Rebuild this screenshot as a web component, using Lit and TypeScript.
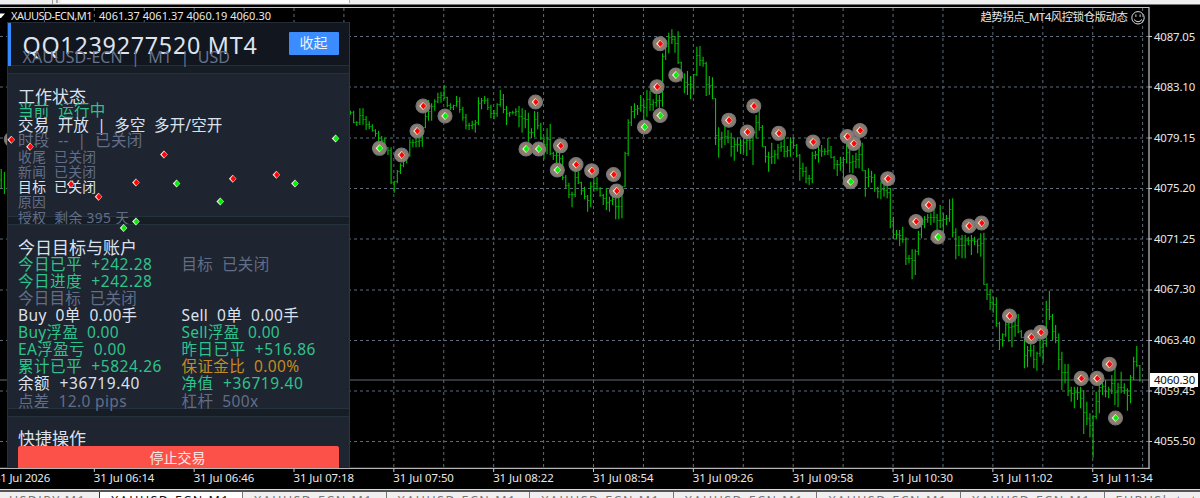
import { LitElement, html, svg, css } from "lit";
import { customElement, property } from "lit/decorators.js";

const STEP = 3.12;
const ORIGIN = 394.2;
const GRID_Y = [36.5, 87, 138, 188.5, 239, 290, 340.5, 391, 441.5];
const PRICES = ["4087.05", "4083.10", "4079.15", "4075.20", "4071.25", "4067.30", "4063.40", "4059.45", "4055.50"];
const TIMES = ["31 Jul 2026", "31 Jul 06:14", "31 Jul 06:46", "31 Jul 07:18", "31 Jul 07:50", "31 Jul 08:22", "31 Jul 08:54", "31 Jul 09:26", "31 Jul 09:58", "31 Jul 10:30", "31 Jul 11:02", "31 Jul 11:34"];

// Each series: first bar index, vertical base, then "high-low" pairs in thirds of a pixel.
const SERIES: [number, number, string][] = [
  [-14, 60, "152-164 152-190 184-198 145-195 145-194 168-210 184-208 193-215 208-230 212-245 228-255 233-265 262-285 262-372 362-398 330-370 310-342 295-322 280-310 238-290 238-262 230-262 225-262 198-260 160-205 120-182 130-182 118-152 98-130 95-128 75-118 110-142 130-150 134-150 108-140 112-158 140-182 162-208 188-210 182-208 180-218 112-195 114-148 108-132 114-150 134-175 150-178 130-170 90-140"],
  [35, 80, "42-100 78-135 95-110 92-103 85-108 78-142 85-158 90-145 98-185 145-175 93-172 95-148 128-180 170-238 145-222 132-225 215-240 180-250 205-250 225-300 285-325 308-355 335-382 270-352 275-312 305-345 320-358 345-395 305-382 295-335 292-332 322-350 342-375 325-390 350-395 335-375 345-418 348-418 320-415 215-320 118-228"],
  [76, 0, "318-378 310-355 315-345 285-335 300-375 270-350 272-332 298-332 275-320 285-345 160-320 120-180 98-160 88-132 108-158 94-192 185-245 220-280 213-285 228-298 222-282 140-228 138-198 170-200 185-288 228-285 232-298 295-435 382-473 395-445 375-435 390-430 398-470 415-482 412-455 418-462 400-458 395-468 400-450 385-495 345-415 320-392 375-440 438-488 455-515 428-492 450-492 432-478 425-455 410-472 438-472 412-470"],
  [128, 100, "112-145 132-172 162-242 188-230 200-250 225-255 155-250 152-178 122-188 135-170 145-165 114-165 138-175 168-208 180-228 170-212 170-255 125-190 130-218 165-220 158-205 108-205 128-212 210-290 205-262 212-248 222-275 260-295 245-298 250-290 255-295 265-385 350-418 390-418 390-438 380-428 412-495 465-490 448-538 448-525 392-465 365-415 348-385 342-368 340-375 315-368 342-392 315-385 340-405 345-375 298-365 295-412 385-478 408-468"],
  [182, 190, "135-205 135-205 140-165 135-195 140-165 148-190 130-200 128-285 280-330 298-360 320-368 322-410 395-480 430-470 370-440 375-455 375-472 385-440 372-430 420-445 440-535 468-532 460-500 465-535 485-542 440-500 450-518 332-470 302-390 372-450 405-460 430-540 485-600 522-580 522-618 590-635 590-655 590-630 590-655 600-732 635-705 670-742 675-803 605-688 575-670 568-615 570-622 590-625 555-612 520-645 578-652 545-610 580-612 595-662 555-640 500-570 468-530 525-575"],
];

interface Bar { x: number; high: number; low: number }

const BARS: Bar[] = SERIES.flatMap(([first, base, data]) =>
  data.split(" ").map((pair, n) => {
    const [h, l] = pair.split("-").map(Number);
    return { x: ORIGIN + (first + n) * STEP, high: base + h / 3, low: base + l / 3 };
  })
);

const stems = (): string =>
  "M1.2 169V188M4.4 172V194" + BARS.map((b) => `M${b.x.toFixed(2)} ${b.high.toFixed(1)}V${b.low.toFixed(1)}`).join("");

// Open and close notches between neighbouring bars.
const notches = (): string => {
  let d = "M0 180H2";
  BARS.forEach((b, i) => {
    const next = BARS[i + 1];
    if (next) {
      const top = Math.max(b.high, next.high);
      const bottom = Math.min(b.low, next.low);
      const y = Math.floor(top + (bottom - top) * 0.45) + 0.5;
      d += `M${b.x.toFixed(2)} ${y}h1.6M${(next.x - 1.2).toFixed(2)} ${y}h1.2`;
    }
  });
  return d;
};

type Mark = [number, number, "r" | "g"];
const SIGNALS: Mark[] = [
  [379.5, 148.3, "g"], [401.5, 155, "r"], [417, 131, "r"], [423, 106, "r"], [445, 116, "g"],
  [535.5, 102, "r"], [526, 149, "g"], [538.7, 149, "g"], [560.5, 145.8, "r"], [557.3, 170, "g"],
  [576, 164.5, "r"], [591.7, 170.7, "r"], [613.5, 174.5, "r"], [616.5, 191, "r"], [657, 86.7, "r"],
  [660, 43.7, "r"], [660.2, 115.5, "g"], [644.5, 127, "g"], [675.8, 75, "g"], [728.8, 120.2, "r"],
  [747.3, 132, "r"], [753.8, 106, "r"], [778.7, 133.3, "r"], [813, 142, "r"], [847.3, 136.5, "r"],
  [853.7, 143.5, "r"], [860, 130.5, "r"], [850.5, 181.7, "g"], [887.8, 178.7, "r"], [916, 221.5, "r"],
  [928.6, 205.1, "r"], [938, 237, "g"], [969, 226, "r"], [981.5, 223, "r"], [1009.5, 316, "r"],
  [1031.2, 337, "r"], [1040.8, 332.2, "r"], [1081.2, 378.4, "r"], [1097, 378.4, "r"], [1109.3, 364.2, "r"],
  [1115.5, 418, "g"],
];
const ON_PANEL: Mark[] = [
  [11.3, 139.8, "r"], [30, 146.8, "r"], [164, 154.6, "r"], [335.6, 138.4, "g"], [136, 182.5, "r"],
  [176.6, 183.5, "g"], [232.8, 178.8, "r"], [276.4, 174.8, "r"], [295, 183.5, "g"], [70.8, 184.2, "r"],
  [98.6, 196.8, "r"], [220.3, 201.5, "g"], [136, 221.6, "g"], [123.6, 228, "g"],
];

const diamond = ([x, y, kind]: Mark) => svg`
  <path d=${`M${x} ${y - 4}L${x + 3.7} ${y}L${x} ${y + 4}L${x - 3.9} ${y}Z`} fill="#f4ece8"></path>
  <path d=${`M${x + 0.2} ${y - 3.2}L${x + 3.3} ${y}L${x + 0.2} ${y + 3.2}L${x - 2.3} ${y}Z`} fill=${kind === "r" ? "#ff0505" : "#00f400"}></path>`;

/** A run of text whose tracking is tuned so that it spans a known width. */
@customElement("text-run")
export class TextRun extends LitElement {
  @property() text = "";
  @property({ type: Number }) span = 0;

  static styles = css`
    :host { display: block; white-space: pre; flex: none; }
    .run { display: inline-block; white-space: pre; }
  `;

  firstUpdated() {
    const el = this.renderRoot.querySelector(".run") as HTMLElement;
    const natural = el.getBoundingClientRect().width;
    if (this.span && natural) {
      el.style.letterSpacing = `${((this.span - natural) / this.text.length).toFixed(3)}px`;
    }
  }

  render() {
    return html`<span class="run">${this.text}</span>`;
  }
}

type Cell = [string, number, string];
const STATUS: [string, number, string, string][] = [
  ["当前  运行中", 87.5, "green", "big"],
  ["交易  开放  |  多空  多开/空开", 204.5, "white", "big"],
  ["时段  --  |  已关闭", 124.5, "dim", "big"],
  ["收尾  已关闭", 78.5, "dim", "small"],
  ["新闻  已关闭", 78.5, "dim", "small"],
  ["目标  已关闭", 78.5, "white", "small"],
  ["原因", 28, "dim", "small"],
  ["授权  剩余 395 天", 111.5, "dim", "small"],
];
const ACCOUNT: [Cell, Cell?][] = [
  [["今日已平  +242.28", 134.5, "green"], ["目标  已关闭", 88, "dim"]],
  [["今日进度  +242.28", 134.5, "green"]],
  [["今日目标  已关闭", 119, "dim"]],
  [["Buy  0单  0.00手", 119.5, "white"], ["Sell  0单  0.00手", 117.5, "white"]],
  [["Buy浮盈  0.00", 101, "green"], ["Sell浮盈  0.00", 98.5, "green"]],
  [["EA浮盈亏  0.00", 108, "green"], ["昨日已平  +516.86", 134.5, "green"]],
  [["累计已平  +5824.26", 144, "green"], ["保证金比  0.00%", 118, "amber"]],
  [["余额  +36719.40", 122, "white"], ["净值  +36719.40", 122, "green"]],
  [["点差  12.0 pips", 109, "dim"], ["杠杆  500x", 77, "dim"]],
];

@customElement("status-panel")
export class StatusPanel extends LitElement {
  static styles = css`
    :host {
      display: flex; flex-direction: column; box-sizing: border-box; overflow: hidden;
      width: 343px; height: 446px; background: #171d25; border-right: 1px solid #2b3642;
      border-left: 1px solid #25303c; font-family: "Noto Sans", "Noto Sans CJK SC", sans-serif;
    }
    .head { display: flex; height: 44px; flex: none; box-sizing: border-box; background: #12161f;
      border-top: 1px solid #232c37; border-bottom: 1px solid #232f3a; }
    .accent { width: 4px; height: 43px; background: #348aff; margin-left: -1px; }
    .titles { flex: 1; padding: 9px 0 0 11.5px; color: #dde4f0; }
    .name { font-size: 23.3px; line-height: 26px; height: 18.5px; }
    .pair { font-size: 16px; line-height: 12px; color: #66728b; }
    .fold { width: 50px; height: 23px; margin: 9px 10px 0 0; border-radius: 1px; background: #3a8cff;
      color: #edf4ff; font-size: 14px; line-height: 22px; text-align: center; text-indent: -1px; }
    .card { flex: none; box-sizing: border-box; background: #1e2430; margin-top: 7px; padding-left: 10px;
      border-top: 1px solid #25323e; border-bottom: 1px solid #25323e; }
    .status { height: 144px; padding-top: 14px; }
    .account { height: 185px; padding-top: 14px; }
    .actions { height: 60px; padding-top: 13px; }
    .heading { font-size: 17px; line-height: 17px; color: #dbe2ee; }
    .status .heading { height: 14.8px; }
    .account .heading { height: 16.5px; }
    .actions .heading { height: 16px; }
    .row { display: grid; grid-template-columns: 163.5px 1fr; height: 17.15px; line-height: 17.15px; font-size: 15.5px; }
    .line { height: 15.25px; line-height: 15.25px; }
    .big { font-size: 15.5px; }
    .small { font-size: 13.8px; }
    .green { color: #2fc28c; }
    .white { color: #dbe2ee; }
    .dim { color: #626e87; }
    .amber { color: #c48c20; }
    .stop { width: 321px; height: 30px; background: #fb5148; border-radius: 2px; color: #ffe9e7;
      font-size: 14px; line-height: 24px; text-align: center; box-sizing: border-box; padding-right: 2px; position: relative; }
  `;

  render() {
    return html`
      <div class="head">
        <div class="accent"></div>
        <div class="titles">
          <text-run class="name" text="QQ1239277520 MT4" span="235"></text-run>
          <text-run class="pair" text="XAUUSD-ECN  |  M1  |  USD" span="207.5"></text-run>
        </div>
        <div class="fold">收起</div>
      </div>
      <div class="card status">
        <div class="heading">工作状态</div>
        ${STATUS.map(([t, w, tone, size]) => html`<text-run class="line ${tone} ${size}" text=${t} span=${w}></text-run>`)}
      </div>
      <div class="card account">
        <div class="heading">今日目标与账户</div>
        ${ACCOUNT.map((cells) => html`<div class="row">
          ${cells.map((c) => (c ? html`<text-run class=${c[2]} text=${c[0]} span=${c[1]}></text-run>` : null))}
        </div>`)}
      </div>
      <div class="card actions">
        <div class="heading">快捷操作</div>
        <div class="stop">停止交易</div>
      </div>
    `;
  }
}

@customElement("app-root")
export class AppRoot extends LitElement {
  static styles = css`
    :host { display: flex; flex-direction: column; width: 1200px; height: 498px; overflow: hidden;
      background: #000; color: #e8e8e8; font-family: "Noto Sans", "Noto Sans CJK SC", sans-serif; font-size: 11px; }
    .toolbar { display: flex; flex: none; height: 4px; background: #efefef; border-bottom: 1px solid #777; }
    .tools { width: 52px; border-right: 1px solid #999; }
    .grip { width: 2px; height: 3px; margin-left: 3px; background: #aaa; }
    .field { width: 288px; height: 3px; margin-left: 3px; background: #fbfbfb; border-right: 1px solid #aaa; }
    .stage { display: grid; flex: none; height: 485px; grid-template-columns: 1150px 50px; grid-template-rows: 464px 21px; position: relative; }
    .canvas { position: absolute; left: 0; top: -5px; }
    .marks { z-index: 2; }
    .panel { position: absolute; left: 7px; top: 17px; z-index: 1; }
    .bar { display: flex; justify-content: space-between; height: 20px; padding: 3px 22.5px 0 11px; box-sizing: border-box; z-index: 1; }
    .quote { display: flex; line-height: 16px; }
    .quote .ohlc { margin-left: 7px; }
    .expert { line-height: 18px; font-size: 11.4px; }
    .prices { padding: 23.5px 0 0 4px; z-index: 1; }
    .price { height: 50.6px; line-height: 16px; font-size: 11.4px; }
    .times { display: flex; grid-column: 1 / 3; z-index: 1; padding-top: 1px; margin-left: -6px; }
    .time { width: 99.84px; flex: none; line-height: 16px; font-size: 11.4px; }
    .last { position: absolute; left: 1150px; top: 368px; width: 48px; height: 14px; padding-left: 4px; box-sizing: border-box;
      background: #fff; color: #111; font-size: 11.4px; line-height: 14px; z-index: 2; }
    .tabs { display: flex; flex: none; height: 8px; box-sizing: border-box; border-top: 2px solid #555; background: #f0eeee; box-shadow: 0 -1px 0 #ddd; z-index: 2; }
    .tab { flex: none; width: 143.6px; box-sizing: border-box; border-left: 1px solid #777; padding-left: 11px; height: 8px;
      overflow: hidden; color: #777; font-size: 12.5px; line-height: 18px; }
    .first { width: 99px; border: 0; padding-left: 9px; }
    .active { background: #fff; color: #111; width: 143px; border-color: #333; }
  `;

  private grid() {
    const xs = Array.from({ length: 23 }, (_, k) => 44.4 + k * 49.92);
    return svg`
      <g stroke="#5f6c7a" stroke-width="1" stroke-dasharray="3 3" fill="none">
        ${xs.map((x) => svg`<path d=${`M${x.toFixed(2)} 8V468`}></path>`)}
        ${GRID_Y.map((y) => svg`<path d=${`M0 ${y}H1149`}></path>`)}
      </g>
      <path d="M0 380H1149" stroke="#626c77"></path>
      <path d="M0 7.5H1149M1149 7V469" stroke="#c4c4c4" stroke-width="1.2" fill="none"></path>
      <path d="M0 468.3H1149.5" stroke="#b5b5b5" stroke-width="1.2"></path>
      ${GRID_Y.map((y) => svg`<path d=${`M1149 ${y}h3`} stroke="#ccc"></path>`)}
      ${xs.filter((_, k) => k % 2 === 1).map((x) => svg`<path d=${`M${x} 469v3`} stroke="#ccc"></path>`)}`;
  }

  render() {
    const tabs = ["USDJPY,M1", "XAUUSD-ECN,M1", "XAUUSD-ECN,M1", "XAUUSD-ECN,M1", "XAUUSD-ECN,M1", "XAUUSD-ECN,M1", "XAUUSD-ECN,M1", "XAUUSD-ECN,M1", "EURUSb,tot"];
    return html`
      <div class="toolbar"><div class="tools"></div><div class="grip"></div><div class="field"></div></div>
      <div class="stage">
        <svg class="canvas" width="1200" height="490" viewBox="0 0 1200 490">
          ${this.grid()}
          <path d=${stems()} stroke="#00c400" stroke-width="1.1" fill="none"></path>
          <path d=${notches()} stroke="#00a800" stroke-width="0.8" fill="none"></path>
          <path d="M0 13.5H5L1 18H0Z" fill="#fff"></path>
          <g fill="#8d7b6b" stroke="#707780" stroke-width="1.1">
            <circle cx="11.3" cy="139.3" r="7"></circle>
            ${SIGNALS.map(([x, y]) => svg`<circle cx=${x} cy=${y} r="7"></circle>`)}
          </g>
          ${SIGNALS.map(diamond)}
          <g stroke="#ddd" fill="none" stroke-width="1">
            <circle cx="1138" cy="17.8" r="6.2"></circle>
            <path d="M1134 19.5Q1138 24 1142 19.5M1135.9 14.5v2.4M1140.1 14.5v2.4"></path>
          </g>
        </svg>
        <div class="bar">
          <div class="quote">
            <text-run text="XAUUSD-ECN,M1" span="81"></text-run>
            <text-run class="ohlc" text="4061.37 4061.37 4060.19 4060.30" span="172"></text-run>
          </div>
          <text-run class="expert" text="趋势拐点_MT4风控锁仓版动态" span="147"></text-run>
        </div>
        <div class="prices">${PRICES.map((p) => html`<text-run class="price" text=${p} span="41"></text-run>`)}</div>
        <div class="times">${TIMES.map((t, i) => html`<text-run class="time" text=${t} span=${i ? 60.5 : 56}></text-run>`)}</div>
        <text-run class="last" text="4060.30" span="41"></text-run>
        <status-panel class="panel"></status-panel>
        <svg class="canvas marks" width="350" height="300" viewBox="0 0 350 300">${ON_PANEL.map(diamond)}</svg>
      </div>
      <div class="tabs">
        ${tabs.map((t, i) => html`<text-run class="tab ${i === 0 ? "first" : i === 1 ? "active" : ""}" text=${t} span=${i === 0 ? 77 : i === 8 ? 82 : 119}></text-run>`)}
      </div>
    `;
  }
}
